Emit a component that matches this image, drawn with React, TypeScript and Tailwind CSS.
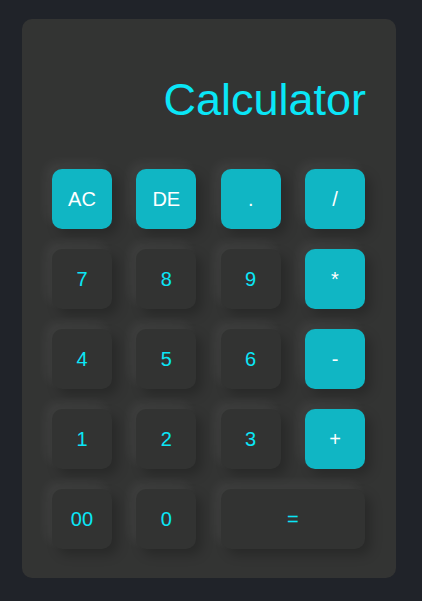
const KEYS: { label: string; op?: boolean; wide?: boolean }[] = [
  { label: 'AC', op: true },
  { label: 'DE', op: true },
  { label: '.', op: true },
  { label: '/', op: true },
  { label: '7' },
  { label: '8' },
  { label: '9' },
  { label: '*', op: true },
  { label: '4' },
  { label: '5' },
  { label: '6' },
  { label: '-', op: true },
  { label: '1' },
  { label: '2' },
  { label: '3' },
  { label: '+', op: true },
  { label: '00' },
  { label: '0' },
  { label: '=', wide: true },
];

export default function App() {
  return (
    <div
      className="min-h-screen w-full bg-[#202329] pt-[19px] pl-[22px]"
      style={{ fontFamily: '"Liberation Sans", Arial, sans-serif' }}
    >
      <div className="w-[374px] h-[559px] rounded-[10px] bg-[#333433] pt-[57px] pl-[30px] pr-[31px]">
        <div className="h-[46px] pt-[1px] -mr-[1px] text-right text-[45px] leading-none text-[#0ae6f7]">
          Calculator
        </div>
        <div className="mt-[47px] grid grid-cols-4 gap-x-[24.4px] gap-y-[20px]">
          {KEYS.map((k) => (
            <button
              key={k.label}
              className={`h-[60px] rounded-[10px] text-[20px] flex items-center justify-center shadow-[6px_6px_12px_rgba(0,0,0,0.22),-6px_-6px_12px_rgba(255,255,255,0.06)] ${
                k.wide ? 'col-span-2' : ''
              } ${k.op ? 'bg-[#10b6c4] text-white' : 'bg-[#323332] text-[#0ae6f7]'}`}
            >
              {k.label}
            </button>
          ))}
        </div>
      </div>
    </div>
  );
}
